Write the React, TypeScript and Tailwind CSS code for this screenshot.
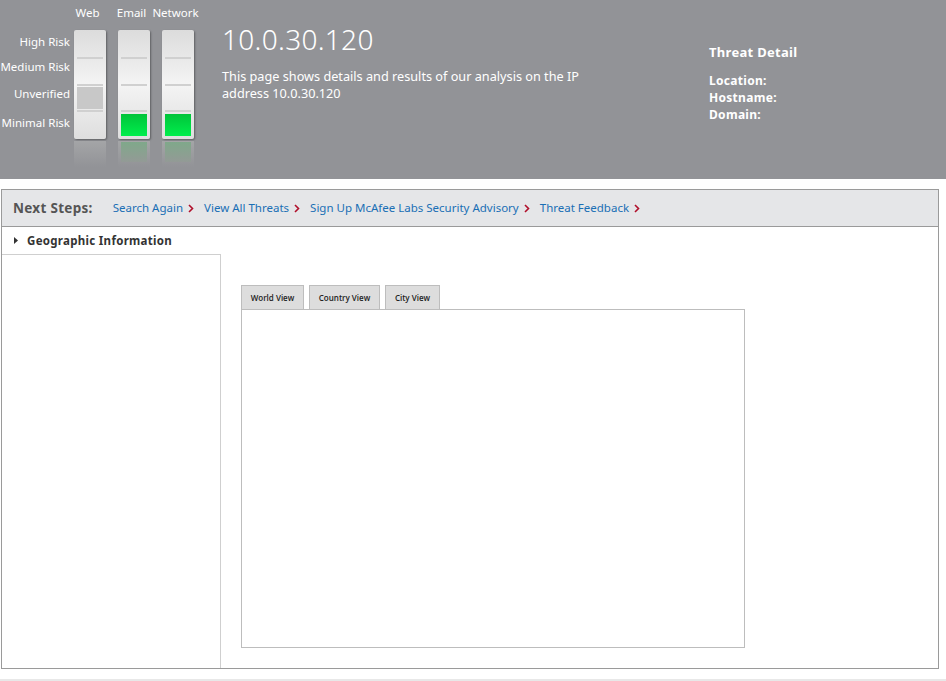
import React from 'react';

const font = { fontFamily: '"Noto Sans", "Open Sans", sans-serif' };

const Meter: React.FC<{ level: 'unverified' | 'minimal' }> = ({ level }) => {
    const rows = ['high', 'medium', 'unverified', 'minimal'];
    return (
        <div className="flex flex-col items-center">
            <div className="w-[32px] h-[109px] rounded-[2px] bg-gradient-to-b from-[#dcdcdc] via-[#f4f4f4] to-[#dedede] shadow-[1px_1px_2px_rgba(0,0,0,0.35)] flex flex-col px-[3px] py-[2px]">
                {rows.map((r, i) => (
                    <div key={r} className={`flex-1 flex items-center ${i < 3 ? 'border-b-2 border-[#d0d0d0]' : ''}`}>
                        {r === level && (
                            <div className={`w-full h-[22px] ${level === 'minimal' ? 'bg-gradient-to-b from-[#00c43a] to-[#00ee4c]' : 'bg-[#c8c8c8]'}`} />
                        )}
                    </div>
                ))}
            </div>
            <div className="mt-[2px] w-[32px] h-[26px] bg-gradient-to-b from-[#a4a5a7] to-[#929397] px-[3px] pt-[1px]">
                {level === 'minimal' && <div className="h-[20px] bg-gradient-to-b from-[#7fa88a] to-[#939a96]" />}
            </div>
        </div>
    );
};

const Chevron = () => (
    <svg width="6" height="9" viewBox="0 0 6 9" className="inline-block ml-[5px] mb-[1px]">
        <path d="M1 1l3.5 3.5L1 8" stroke="#b0102b" strokeWidth="1.6" fill="none" />
    </svg>
);

export default function App() {
    const links = ['Search Again', 'View All Threats', 'Sign Up McAfee Labs Security Advisory', 'Threat Feedback'];
    return (
        <div className="w-[946px] h-[681px] bg-white overflow-hidden relative" style={font}>
            {/* header */}
            <div className="h-[179px] bg-[#929397] flex text-white">
                <div className="w-[222px] flex pt-[5px]">
                    <div className="w-[74px] flex flex-col items-end pt-[29px] text-[11.5px] leading-[16px] pr-[4px] whitespace-nowrap">
                        <span>High Risk</span>
                        <span className="mt-[9px]">Medium Risk</span>
                        <span className="mt-[11px]">Unverified</span>
                        <span className="mt-[13px]">Minimal Risk</span>
                    </div>
                    <div className="flex gap-[12px]">
                        {[['Web', 'unverified'], ['Email', 'minimal'], ['Network', 'minimal']].map(([name, lvl]) => (
                            <div key={name} className="flex flex-col items-center w-[32px]">
                                <span className="text-[11.5px] leading-[16px] h-[25px] whitespace-nowrap mr-[5px]">{name}</span>
                                <Meter level={lvl as 'unverified' | 'minimal'} />
                            </div>
                        ))}
                    </div>
                </div>
                <div className="w-[487px] pt-[20px]">
                    <h1 className="text-[28px] font-light leading-[38px] tracking-[0.3px]">10.0.30.120</h1>
                    <p className="mt-[10px] text-[12.7px] leading-[17px] w-[370px]">This page shows details and results of our analysis on the IP address 10.0.30.120</p>
                </div>
                <div className="pt-[44px]">
                    <div className="text-[13px] font-bold leading-[17px] tracking-[0.3px]">Threat Detail</div>
                    <div className="mt-[11px] text-[12px] font-bold leading-[17px] tracking-[0.3px] flex flex-col">
                        <span>Location:</span>
                        <span>Hostname:</span>
                        <span>Domain:</span>
                    </div>
                </div>
            </div>

            {/* body */}
            <div className="mt-[10px] ml-[1px] w-[938px] h-[480px] border border-[#9a9a9a] flex flex-col">
                <div className="h-[37px] bg-[#e5e6e8] border-b border-[#9a9a9a] flex items-center px-[11px] text-[11.5px]">
                    <span className="text-[13.5px] font-bold text-[#555] tracking-[0.3px] mr-[20px]">Next Steps:</span>
                    {links.map((l) => (
                        <span key={l} className="text-[#1a6fb5] mr-[10px] whitespace-nowrap">
                            {l}
                            <Chevron />
                        </span>
                    ))}
                </div>
                <div className="h-[27px] flex items-center pl-[12px] text-[11.5px] font-bold text-[#333] tracking-[0.3px]">
                    <svg width="5" height="7" viewBox="0 0 5 7" className="mr-[8px]">
                        <path d="M0 0l4 3.5L0 7z" fill="#333" />
                    </svg>
                    Geographic Information
                </div>
                <div className="flex-1 flex">
                    <div className="w-[219px] border-t border-r border-[#cfcfcf]" />
                    <div className="flex-1 pl-[20px] pt-[31px]">
                        <div className="flex gap-[5px] h-[24px]" style={{ fontFamily: '"Open Sans", sans-serif' }}>
                            {['World View', 'Country View', 'City View'].map((t, i) => (
                                <div key={t} className={`h-[24px] bg-[#dddddd] border border-b-0 border-[#bdbdbd] flex items-center justify-center text-[8px] font-semibold text-[#222] ${i === 0 ? 'w-[63px]' : i === 1 ? 'w-[71px]' : 'w-[55px]'}`}>
                                    {t}
                                </div>
                            ))}
                        </div>
                        <div className="w-[504px] h-[339px] border border-[#bdbdbd]" />
                    </div>
                </div>
            </div>
            <div className="absolute left-0 right-0 top-[679px] h-[2px] bg-[#e8e8e8]" />
        </div>
    );
}
